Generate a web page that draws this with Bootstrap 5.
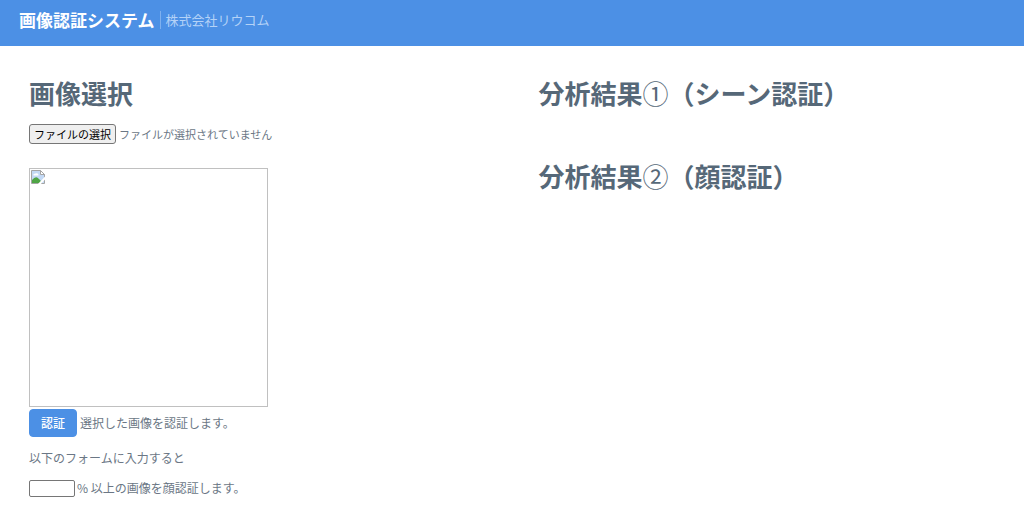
<!DOCTYPE html>
<html lang="ja">
<head>
<meta charset="utf-8">
<meta name="viewport" content="width=device-width, initial-scale=1">
<title>画像認証システム</title>
<link href="https://cdn.jsdelivr.net/npm/bootstrap@5.3.0/dist/css/bootstrap.min.css" rel="stylesheet">
<style>
  body { font-family: "Noto Sans CJK JP", sans-serif; font-size: 12px; line-height: 18px; color: #6b7785; }
  .topbar { background: #4c90e5; padding: 7px 19px 13px; gap: 5px; }
  .site-name { font-size: 17px; line-height: 26px; }
  .company { font-size: 13px; line-height: 18px; color: #b4d2f7; border-left: 1px solid #7fb0ee; padding-left: 5px; }
  .page { padding: 30px 28px 16px 29px; }
  .panels { --bs-gutter-x: 52px; }
  .section-title { font-size: 26px; line-height: 34px; font-weight: 700; color: #566878; }
  .results .section-title { margin-bottom: 49px; }
  .circled { font-weight: 400; }
  .file-row { margin-top: 14px; gap: 3px; font-size: 11px; }
  .file-btn { font-size: 11px; line-height: 16px; padding: 1px 4px; color: #000; background: #efefef; border: 1px solid #767676; border-radius: 3px; }
  .preview { max-width: 239px; aspect-ratio: 1; margin-top: 24px; border: 1px solid #c0c0c0; }
  .preview svg { display: block; }
  .btn-auth { --bs-btn-bg: #4c90e5; --bs-btn-border-color: #4c90e5; --bs-btn-hover-bg: #3a7fd6; --bs-btn-color: #fff; --bs-btn-font-size: 12px; --bs-btn-line-height: 18px; --bs-btn-padding-y: 4px; --bs-btn-padding-x: 11px; --bs-btn-border-radius: 4px; --bs-btn-font-weight: 500; }
  .auth-row { margin-top: 2px; gap: 3px; }
  .rate-row { gap: 2px; }
  .rate { width: 46px; height: 17px; padding: 1px 2px; font-size: 12px; border: 1px solid #767676; border-radius: 2px; }
</style>
</head>
<body>
<header class="topbar d-flex align-items-center">
  <a href="#" class="site-name fw-bold text-white text-decoration-none">画像認証システム</a>
  <span class="company">株式会社リウコム</span>
</header>
<main class="page container-fluid">
  <div class="row panels">
    <section class="col-6">
      <h1 class="section-title mb-0" id="select-title">画像選択</h1>
      <div class="file-row d-flex align-items-center">
        <button type="button" class="file-btn" id="file-btn">ファイルの選択</button>
        <span id="file-name">ファイルが選択されていません</span>
        <input type="file" id="file" accept="image/*" aria-labelledby="select-title" hidden>
      </div>
      <div class="preview">
        <svg width="16" height="16" viewBox="0 0 16 16" aria-hidden="true">
          <path d="M1.500 1.500H10.500L14.500 5.500V14.500H1.500Z" fill="#c3d9f5" stroke="#a5a5a5"/>
          <path d="M10.500 1.500V5.500H14.500Z" fill="#fff" stroke="#a5a5a5"/>
          <path d="M3.500 6.500a2 1.500 0 0 1 2-2 2 2 0 0 1 3 2Z" fill="#fff"/>
          <path d="M2 14V11Q6 6 9 10L12 13V14Z" fill="#4fa546"/>
          <path d="M7 16L15.500 7V10L10 16Z" fill="#fff"/>
        </svg>
      </div>
      <div class="auth-row d-flex align-items-center">
        <button type="submit" class="btn btn-auth">認証</button>
        <span>選択した画像を認証します。</span>
      </div>
      <p class="mb-0 mt-2 pt-1">以下のフォームに入力すると</p>
      <div class="rate-row d-flex align-items-center mt-2 pt-1">
        <input type="text" class="rate" id="rate" inputmode="numeric">
        <label for="rate">% 以上の画像を顔認証します。</label>
      </div>
    </section>
    <section class="col-6 results">
      <h2 class="section-title">分析結果<span class="circled">①</span>（シーン認証）</h2>
      <h2 class="section-title">分析結果<span class="circled">②</span>（顔認証）</h2>
    </section>
  </div>
</main>
<script src="https://cdn.jsdelivr.net/npm/bootstrap@5.3.0/dist/js/bootstrap.bundle.min.js"></script>
<script>
  const file = document.getElementById('file');
  document.getElementById('file-btn').addEventListener('click', () => file.click());
  file.addEventListener('change', () => {
    if (file.files.length) document.getElementById('file-name').textContent = file.files[0].name;
  });
</script>
</body>
</html>
